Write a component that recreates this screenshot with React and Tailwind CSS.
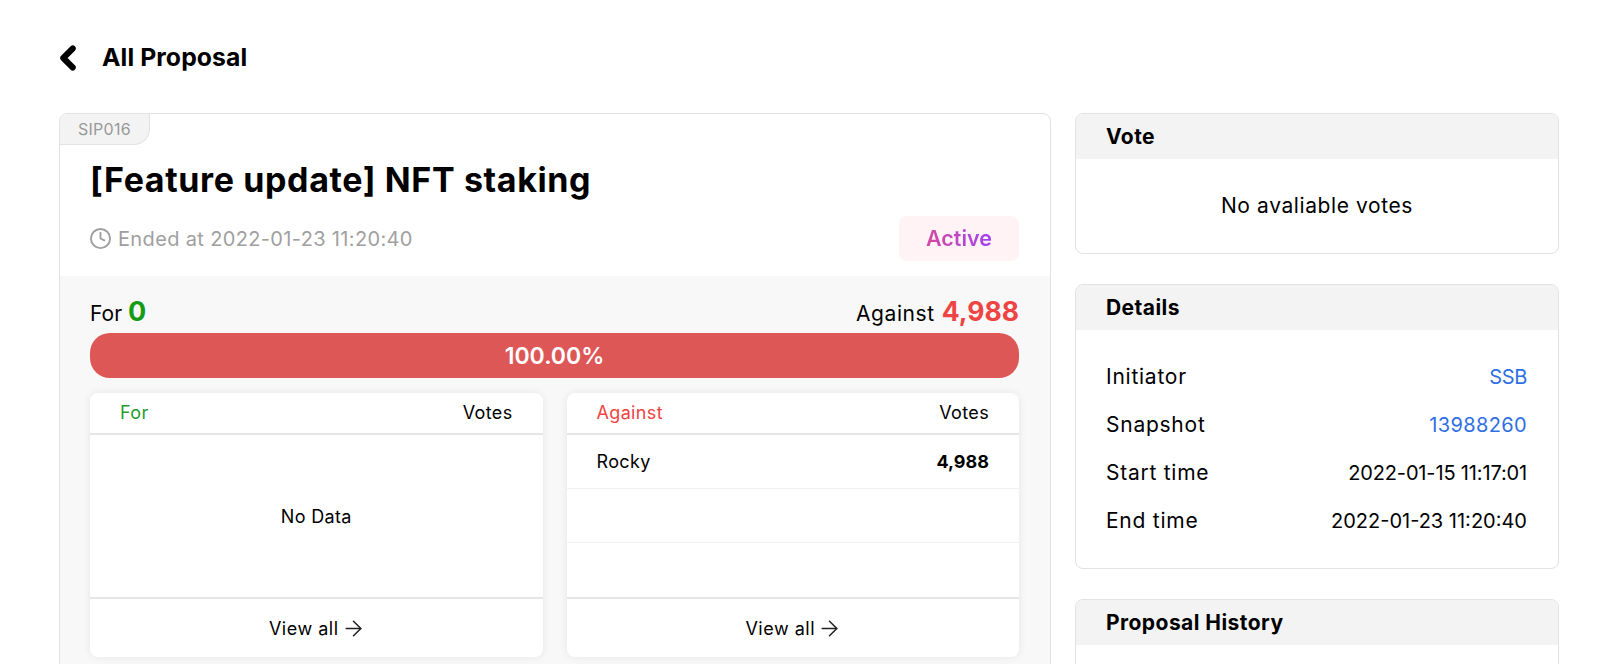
import React from 'react';
import { ArrowRight, ChevronLeft, Clock } from 'lucide-react';

const Panel = ({ title, className = '', children }) => (
  <div className={`border border-[#e2e2e2] rounded-lg bg-white overflow-hidden ${className}`}>
    <div className="h-[45px] pl-[30px] flex items-center bg-[#f3f3f3] text-[21px] font-bold text-black tracking-[0.45px]">{title}</div>
    {children}
  </div>
);

const DetailRow = ({ label, value, link, className = '' }) => (
  <div className="h-12 flex items-center justify-between">
    <span className="text-[21px] tracking-[0.75px]">{label}</span>
    <span className={`${link ? 'text-[#2f6fe4]' : 'text-black'} ${className}`}>{value}</span>
  </div>
);

const VoteTable = ({ label, labelColor, rows }) => (
  <div className="flex-1 h-[264px] bg-white rounded-lg shadow-[0_0_8px_rgba(0,0,0,0.08)] flex flex-col text-[18px] tracking-[0.35px]">
    <div className="h-[42px] px-[30px] pb-[2px] flex items-center justify-between border-b-2 border-[#e6e6e6] shrink-0">
      <span className={labelColor}>{label}</span>
      <span>Votes</span>
    </div>
    <div className="h-[162px] shrink-0">
      {rows ? (
        rows.map((row, i) => (
          <div key={i} className={`h-[54px] px-[30px] flex items-center justify-between ${i < 2 ? 'border-b border-[#f2f2f2]' : ''}`}>
            <span>{row.name}</span>
            <span className="font-bold tracking-normal">{row.votes}</span>
          </div>
        ))
      ) : (
        <div className="h-full flex items-center justify-center">No Data</div>
      )}
    </div>
    <div className="flex-1 border-t-2 border-[#e6e6e6] flex items-center justify-center gap-[2px] pl-[2px]">
      <span className="tracking-[0.5px]">View all</span>
      <ArrowRight className="w-[25px] h-[25px] text-[#222]" strokeWidth={1.5} />
    </div>
  </div>
);

export default function App() {
  return (
    <div className="h-[664px] overflow-hidden bg-white pl-[59px] pr-[48px] text-black font-['Inter','Liberation_Sans',sans-serif]">
      <div className="h-[113px] flex items-center pt-[2px]">
        <ChevronLeft className="w-[38px] h-[38px] -ml-[10px] text-black" strokeWidth={3.8} />
        <span className="ml-[15px] text-[24.75px] font-bold tracking-[0.1px]">All Proposal</span>
      </div>

      <div className="flex gap-6 items-start">
        <div className="w-[992px] shrink-0 border border-[#e2e2e2] rounded-lg bg-white overflow-hidden">
          <div className="h-[31px] w-[90px] bg-[#f3f3f3] border-r border-b border-[#e2e2e2] rounded-br-[16px] flex items-center justify-center text-[16px] text-[#999] tracking-[0.3px]">
            SIP016
          </div>
          <div className="pl-[30px] pr-[31px]">
            <h1 className="text-[34px] leading-[44px] mt-[13px] font-bold tracking-[0.62px]">[Feature update] NFT staking</h1>
            <div className="flex items-center justify-between mt-[14px]">
              <div className="flex items-center gap-[6px] text-[20px] text-[#a0a0a0] tracking-[0.35px] -ml-px">
                <Clock className="w-[23px] h-[23px]" strokeWidth={2} />
                Ended at 2022-01-23 11:20:40
              </div>
              <div className="w-[120px] h-[45px] rounded-lg bg-[#fff3f5] flex items-center justify-center">
                <span className="text-[21.5px] font-semibold bg-linear-to-r from-[#d4489f] to-[#a23fef] bg-clip-text text-transparent">Active</span>
              </div>
            </div>
          </div>

          <div className="mt-[15px] bg-[#f8f8f8] pl-[30px] pr-[31px] pt-[18px] pb-[20px]">
            <div className="flex items-center justify-between h-[39px] pb-[3px]">
              <div className="flex items-baseline gap-[6px]">
                <span className="text-[21px]">For</span>
                <span className="text-[27px] font-bold text-[#169b16]">0</span>
              </div>
              <div className="flex items-baseline gap-[7px]">
                <span className="text-[21px] tracking-[0.6px]">Against</span>
                <span className="text-[26.5px] font-bold text-[#ef4444]">4,988</span>
              </div>
            </div>
            <div className="h-[45px] pt-px rounded-[20px] bg-[#de5757] flex items-center justify-center text-white text-[23px] font-semibold">
              100.00%
            </div>
            <div className="flex gap-6 mt-[15px]">
              <VoteTable label="For" labelColor="text-[#1f9d2e]" />
              <VoteTable
                label="Against"
                labelColor="text-[#ef4444]"
                rows={[{ name: 'Rocky', votes: '4,988' }, { name: '', votes: '' }, { name: '', votes: '' }]}
              />
            </div>
          </div>
        </div>

        <div className="flex-1 flex flex-col gap-[30px] text-[20px]">
          <Panel title="Vote" className="h-[141px]">
            <div className="h-[94px] flex items-center justify-center text-[21px] tracking-[0.6px]">No avaliable votes</div>
          </Panel>
          <Panel title="Details" className="h-[285px]">
            <div className="pl-[30px] pr-[31px] pt-[23px]">
              <DetailRow label="Initiator" value="SSB" link className="tracking-[-0.3px]" />
              <DetailRow label="Snapshot" value="13988260" link className="tracking-[0.35px]" />
              <DetailRow label="Start time" value="2022-01-15 11:17:01" className="tracking-[-0.15px]" />
              <DetailRow label="End time" value="2022-01-23 11:20:40" />
            </div>
          </Panel>
          <Panel title="Proposal History" className="h-[200px]" />
        </div>
      </div>
    </div>
  );
}
